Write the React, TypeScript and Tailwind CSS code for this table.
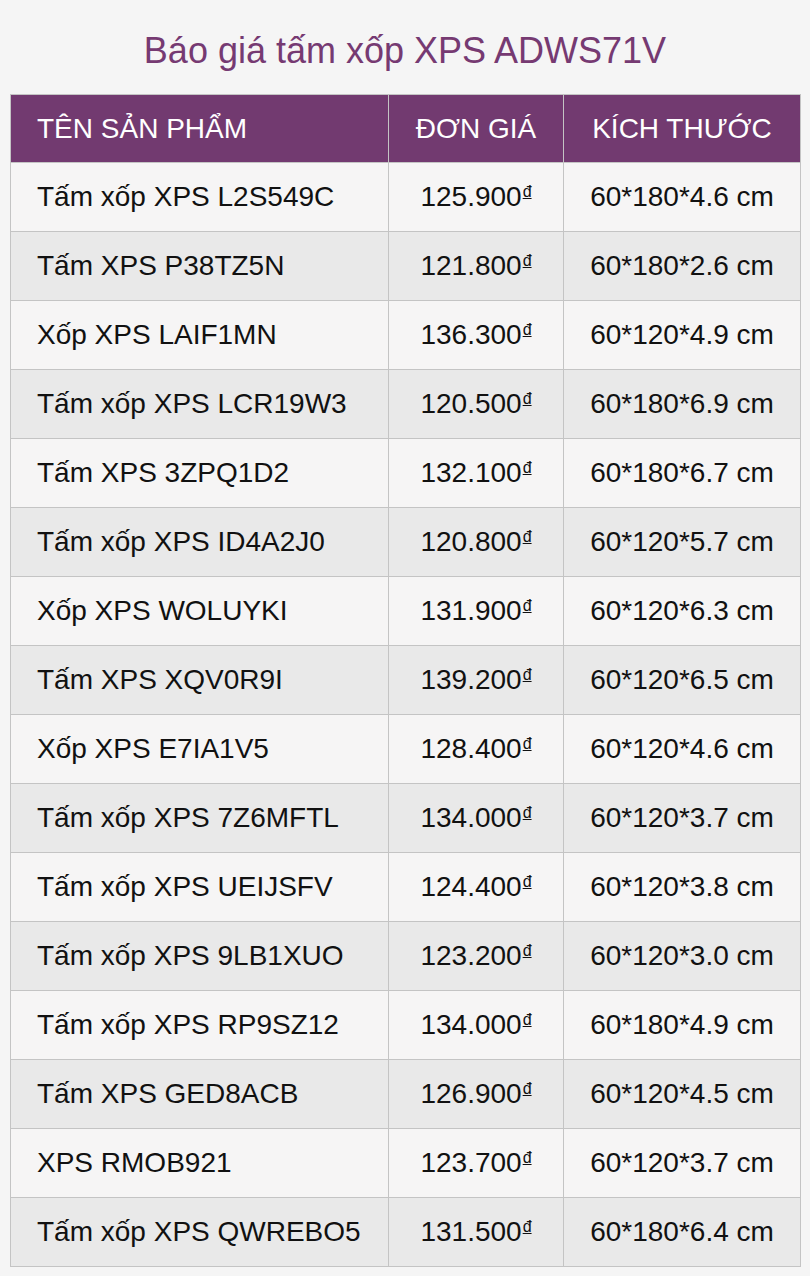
import React from 'react';

const rows: [string, string, string][] = [
  ['Tấm xốp XPS L2S549C', '125.900', '60*180*4.6 cm'],
  ['Tấm XPS P38TZ5N', '121.800', '60*180*2.6 cm'],
  ['Xốp XPS LAIF1MN', '136.300', '60*120*4.9 cm'],
  ['Tấm xốp XPS LCR19W3', '120.500', '60*180*6.9 cm'],
  ['Tấm XPS 3ZPQ1D2', '132.100', '60*180*6.7 cm'],
  ['Tấm xốp XPS ID4A2J0', '120.800', '60*120*5.7 cm'],
  ['Xốp XPS WOLUYKI', '131.900', '60*120*6.3 cm'],
  ['Tấm XPS XQV0R9I', '139.200', '60*120*6.5 cm'],
  ['Xốp XPS E7IA1V5', '128.400', '60*120*4.6 cm'],
  ['Tấm xốp XPS 7Z6MFTL', '134.000', '60*120*3.7 cm'],
  ['Tấm xốp XPS UEIJSFV', '124.400', '60*120*3.8 cm'],
  ['Tấm xốp XPS 9LB1XUO', '123.200', '60*120*3.0 cm'],
  ['Tấm xốp XPS RP9SZ12', '134.000', '60*180*4.9 cm'],
  ['Tấm XPS GED8ACB', '126.900', '60*120*4.5 cm'],
  ['XPS RMOB921', '123.700', '60*120*3.7 cm'],
  ['Tấm xốp XPS QWREBO5', '131.500', '60*180*6.4 cm'],
];

export default function App() {
  return (
    <div className="min-h-[1276px] w-[810px] bg-[#f5f5f5] px-[10px] pt-[29px] font-['Liberation_Sans',Arial,sans-serif]">
      <h1 className="mb-[21px] text-center text-[36px] leading-[44px] text-[#763a72]">Báo giá tấm xốp XPS ADWS71V</h1>
      <table className="w-[791px] border-collapse text-[28px] text-[#111]">
        <thead>
          <tr className="h-[68px] bg-[#723a70] text-white">
            <th className="w-[378px] border border-[#c4c4c4] pl-[26px] text-left font-normal">TÊN SẢN PHẨM</th>
            <th className="w-[175px] border border-[#c4c4c4] text-center font-normal">ĐƠN GIÁ</th>
            <th className="border border-[#c4c4c4] text-center font-normal">KÍCH THƯỚC</th>
          </tr>
        </thead>
        <tbody>
          {rows.map(([name, price, size], i) => (
            <tr key={i} className={`h-[69px] ${i % 2 === 0 ? 'bg-[#f6f5f5]' : 'bg-[#e9e9e9]'}`}>
              <td className="border border-[#c4c4c4] pl-[26px]">{name}</td>
              <td className="border border-[#c4c4c4] text-center">
                {price}
                <span className="relative -top-[9px] ml-[1px] text-[16px] underline">đ</span>
              </td>
              <td className="border border-[#c4c4c4] text-center">{size}</td>
            </tr>
          ))}
        </tbody>
      </table>
    </div>
  );
}
